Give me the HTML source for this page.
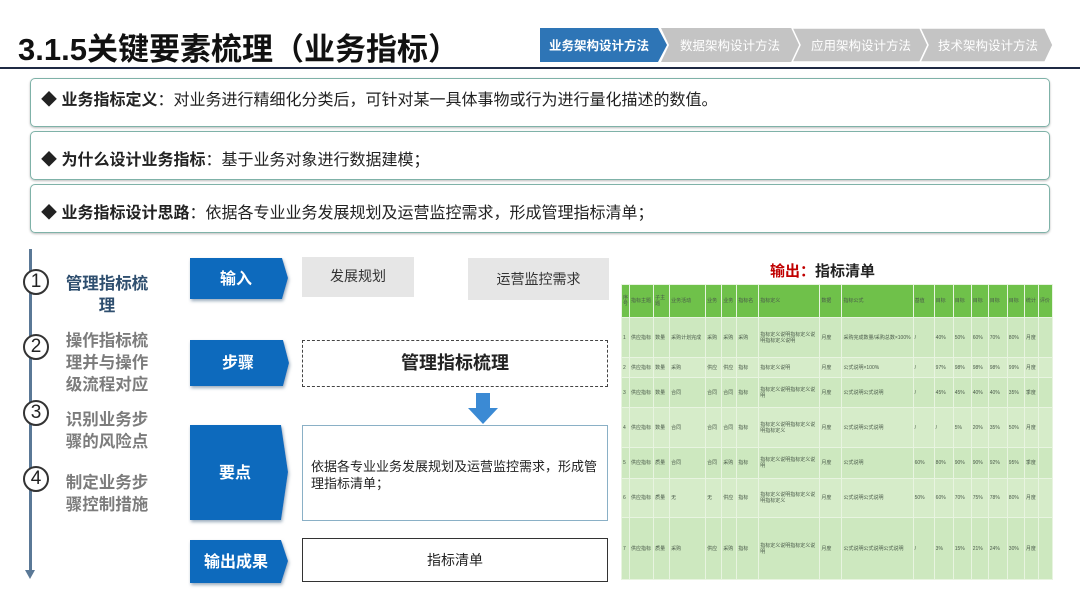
<!DOCTYPE html>
<html><head><meta charset="utf-8"><style>
*{margin:0;padding:0;box-sizing:border-box}
body{width:1080px;height:608px;background:#fff;position:relative;overflow:hidden;font-family:"Liberation Sans","Noto Sans CJK SC",sans-serif;color:#222}
.a{position:absolute}
.title{left:18px;top:24px;font-size:31px;font-weight:bold;color:#111;letter-spacing:0px}
.bx{left:30px;width:1020px;border:1px solid #7fb2a8;border-radius:5px;font-size:16px;padding-left:10px;box-shadow:0 1px 2px #bbb}
.bx b{font-weight:bold}
.step{left:60px;width:94px;font-size:16.5px;font-weight:bold;color:#7c7c7c;line-height:22px;text-align:center}
.circ{left:23px;width:26px;height:26px;border:2px solid #333;border-radius:50%;background:#fff;font-size:19px;text-align:center;line-height:22px;color:#222}
.gb{background:#e6e6e6;font-size:14px;text-align:center;color:#333}
table{border-collapse:collapse;table-layout:fixed}
td{border:1px solid #e8f4e0;font-size:5px;color:#4a5a4a;overflow:hidden;padding:1px;vertical-align:middle;line-height:6px}
</style></head><body>
<div class="a title">3.1.5关键要素梳理（业务指标）</div>
<svg class="a" style="left:540px;top:28px" width="515" height="34">
<polygon points="121,0 252,0 260,17 252,34 121,34 129,17" fill="#c4c4c4"/>
<polygon points="252,0 380,0 388,17 380,34 252,34 260,17" fill="#c4c4c4" stroke="#fff" stroke-width="1.5"/>
<polygon points="380,0 505,0 513,17 505,34 380,34 388,17" fill="#c4c4c4" stroke="#fff" stroke-width="1.5"/>
<polygon points="0,0 118,0 127,17 118,34 0,34" fill="#2e75b6"/>
<text x="59" y="22" font-size="12.5" fill="#fff" text-anchor="middle" font-family="Noto Sans CJK SC" font-weight="bold">业务架构设计方法</text>
<text x="190" y="22" font-size="12.5" fill="#fff" text-anchor="middle" font-family="Noto Sans CJK SC">数据架构设计方法</text>
<text x="321" y="22" font-size="12.5" fill="#fff" text-anchor="middle" font-family="Noto Sans CJK SC">应用架构设计方法</text>
<text x="448" y="22" font-size="12.5" fill="#fff" text-anchor="middle" font-family="Noto Sans CJK SC">技术架构设计方法</text>
</svg>
<div class="a" style="left:0;top:67px;width:1080px;height:2px;background:#1f2a44"></div>
<div class="a bx" style="top:78px;height:49px;padding-top:7px">◆ <b>业务指标定义</b>：对业务进行精细化分类后，可针对某一具体事物或行为进行量化描述的数值。</div>
<div class="a bx" style="top:131px;height:49px;padding-top:14px">◆ <b>为什么设计业务指标</b>：基于业务对象进行数据建模；</div>
<div class="a bx" style="top:184px;height:49px;padding-top:14px">◆ <b>业务指标设计思路</b>：依据各专业业务发展规划及运营监控需求，形成管理指标清单；</div>

<div class="a" style="left:29px;top:249px;width:3px;height:324px;background:#5a7896"></div>
<div class="a" style="left:25px;top:570px;width:0;height:0;border-left:5px solid transparent;border-right:5px solid transparent;border-top:9px solid #5a7896"></div>
<div class="a circ" style="top:269px">1</div>
<div class="a circ" style="top:334px">2</div>
<div class="a circ" style="top:400px">3</div>
<div class="a circ" style="top:466px">4</div>
<div class="a step" style="top:273px;color:#2f4f6f">管理指标梳理</div>
<div class="a step" style="top:330px">操作指标梳理并与操作级流程对应</div>
<div class="a step" style="top:409px">识别业务步骤的风险点</div>
<div class="a step" style="top:472px">制定业务步骤控制措施</div>

<svg class="a" style="left:188px;top:255px" width="105" height="335">
<defs><filter id="s"><feDropShadow dx="1" dy="2" stdDeviation="1.5" flood-color="#9ab"/></filter></defs>
<g fill="#0d6bbd" filter="url(#s)">
<polygon points="2,3 94,3 100,23 94,44 2,44"/>
<polygon points="2,85 95,85 101,108 95,131 2,131"/>
<polygon points="2,170 93,170 100,217 93,265 2,265"/>
<polygon points="2,285 93,285 100,306 93,328 2,328"/>
</g>
<g fill="#fff" font-size="16" font-weight="bold" text-anchor="middle" font-family="Noto Sans CJK SC">
<text x="48" y="29">输入</text><text x="50" y="113">步骤</text><text x="47" y="223">要点</text><text x="48" y="312">输出成果</text></g>
</svg>
<div class="a gb" style="left:302px;top:257px;width:112px;height:40px;line-height:38px">发展规划</div>
<div class="a gb" style="left:468px;top:258px;width:141px;height:42px;line-height:42px">运营监控需求</div>
<div class="a" style="left:302px;top:340px;width:306px;height:47px;border:1px dashed #444;font-size:18px;font-weight:bold;text-align:center;line-height:45px">管理指标梳理</div>
<svg class="a" style="left:467px;top:393px" width="32" height="32"><polygon points="9,0 23,0 23,15 31,15 16,31 1,15 9,15" fill="#3b8ad4"/></svg>
<div class="a" style="left:302px;top:425px;width:306px;height:96px;border:1px solid #8ab0c6;font-size:13px;line-height:17px;padding:32px 8px 0 8px">依据各专业业务发展规划及运营监控需求，形成管理指标清单；</div>
<div class="a" style="left:302px;top:538px;width:306px;height:44px;border:1.5px solid #333;font-size:14px;text-align:center;line-height:42px">指标清单</div>

<div class="a" style="left:770px;top:260px;font-size:15px;font-weight:bold"><span style="color:#c00000">输出：</span>指标清单</div>
<table class="a" style="left:621px;top:284px;width:432px;height:296px">
<colgroup><col style="width:8px"><col style="width:24px"><col style="width:16px"><col style="width:36px"><col style="width:16px"><col style="width:15px"><col style="width:22px"><col style="width:61px"><col style="width:22px"><col style="width:71px"><col style="width:21px"><col style="width:19px"><col style="width:18px"><col style="width:17px"><col style="width:19px"><col style="width:17px"><col style="width:14px"><col style="width:14px"></colgroup>
<tr style="height:33px;background:#6fc14a"><td>序号</td><td>指标主题</td><td>子主题</td><td>业务活动</td><td>业务</td><td>业务</td><td>指标名</td><td>指标定义</td><td>数据</td><td>指标公式</td><td>基值</td><td>目标</td><td>目标</td><td>目标</td><td>目标</td><td>目标</td><td>统计</td><td>评价</td></tr>
<tr style="height:40px;background:#cde8bf"><td>1</td><td>供应指标</td><td>数量</td><td>采购计划完成</td><td>采购</td><td>采购</td><td>采购</td><td>指标定义说明指标定义说明指标定义说明</td><td>月度</td><td>采购完成数量/采购总数×100%</td><td>/</td><td>40%</td><td>50%</td><td>60%</td><td>70%</td><td>80%</td><td>月度</td><td></td></tr>
<tr style="height:20px;background:#d6ecc9"><td>2</td><td>供应指标</td><td>数量</td><td>采购</td><td>供应</td><td>供应</td><td>指标</td><td>指标定义说明</td><td>月度</td><td>公式说明×100%</td><td>/</td><td>97%</td><td>98%</td><td>98%</td><td>98%</td><td>99%</td><td>月度</td><td></td></tr>
<tr style="height:30px;background:#cde8bf"><td>3</td><td>供应指标</td><td>数量</td><td>合同</td><td>合同</td><td>合同</td><td>指标</td><td>指标定义说明指标定义说明</td><td>月度</td><td>公式说明公式说明</td><td>/</td><td>45%</td><td>45%</td><td>40%</td><td>40%</td><td>35%</td><td>季度</td><td></td></tr>
<tr style="height:40px;background:#d6ecc9"><td>4</td><td>供应指标</td><td>数量</td><td>合同</td><td>合同</td><td>合同</td><td>指标</td><td>指标定义说明指标定义说明指标定义</td><td>月度</td><td>公式说明公式说明</td><td>/</td><td>/</td><td>5%</td><td>20%</td><td>35%</td><td>50%</td><td>月度</td><td></td></tr>
<tr style="height:31px;background:#cde8bf"><td>5</td><td>供应指标</td><td>质量</td><td>合同</td><td>合同</td><td>采购</td><td>指标</td><td>指标定义说明指标定义说明</td><td>月度</td><td>公式说明</td><td>60%</td><td>80%</td><td>90%</td><td>90%</td><td>92%</td><td>95%</td><td>季度</td><td></td></tr>
<tr style="height:39px;background:#d6ecc9"><td>6</td><td>供应指标</td><td>质量</td><td>无</td><td>无</td><td>供应</td><td>指标</td><td>指标定义说明指标定义说明指标定义</td><td>月度</td><td>公式说明公式说明</td><td>50%</td><td>60%</td><td>70%</td><td>75%</td><td>78%</td><td>80%</td><td>月度</td><td></td></tr>
<tr style="background:#cde8bf"><td>7</td><td>供应指标</td><td>质量</td><td>采购</td><td>供应</td><td>采购</td><td>指标</td><td>指标定义说明指标定义说明</td><td>月度</td><td>公式说明公式说明公式说明</td><td>/</td><td>3%</td><td>15%</td><td>21%</td><td>24%</td><td>30%</td><td>月度</td><td></td></tr>
</table>
</body></html>
